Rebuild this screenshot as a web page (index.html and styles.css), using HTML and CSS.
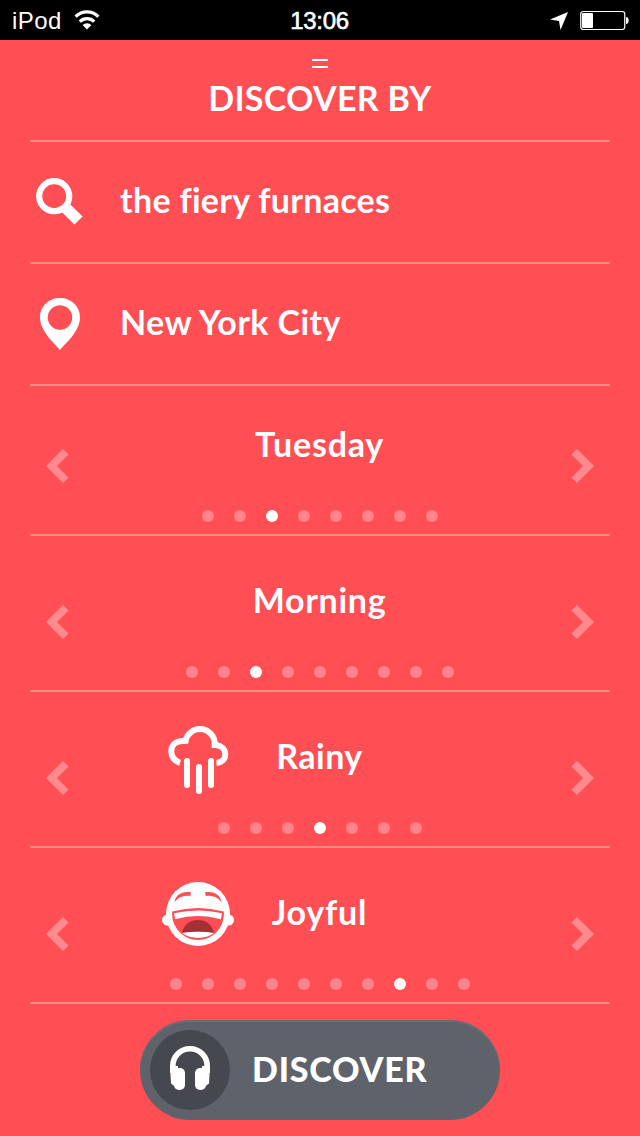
FILE: index.html
```html
<!DOCTYPE html>
<html lang="en">
<head>
    <meta charset="UTF-8">
    <meta name="viewport" content="width=device-width, initial-scale=1.0">
    <title>Discover</title>
    <link rel="stylesheet" href="styles.css">
</head>
<body>
    <div class="status-bar">
        <div class="status-left">
            <span class="device">iPod</span>
            <svg class="wifi" width="26" height="20" viewBox="0 0 26 20">
                <path d="M1.600 6.600a16 16 0 0 1 22.800 0M5.800 11.600a10.200 10.200 0 0 1 14.400 0" fill="none" stroke="#fff" stroke-width="3.200"/>
                <path d="M13 19.500l-4.400-4.500a6.400 6.400 0 0 1 8.800 0z" fill="#fff"/>
            </svg>
        </div>
        <span class="time">13:06</span>
        <div class="status-right">
            <svg class="location" width="18" height="18" viewBox="0 0 18 18">
                <path d="M18 0L10.500 18 9 9 0 7.600z" fill="#fff"/>
            </svg>
            <svg width="50" height="20" viewBox="0 0 50 20">
                <rect x=".75" y="1.500" width="44" height="18" rx="2.500" fill="none" stroke="#fff" stroke-width="1.200"/>
                <rect x="2" y="3" width="11" height="15" rx="1" fill="#fff"/>
                <path d="M46 7c3.600 0 3.600 7 0 7z" fill="#fff"/>
            </svg>
        </div>
    </div>

    <div class="panel">
        <header class="header">
            <div class="handle"></div>
            <h1>DISCOVER BY</h1>
        </header>

        <div class="field">
            <svg class="field-icon" width="60" height="60" viewBox="0 0 60 60">
                <circle cx="24.200" cy="26.200" r="15" fill="none" stroke="#fff" stroke-width="6.200"/>
                <path d="M38.600 32.800L52.600 46.400 44.400 54.400 31 41.200z" fill="#fff"/>
            </svg>
            <span class="query">the fiery furnaces</span>
        </div>

        <div class="field">
            <svg class="field-icon" width="60" height="60" viewBox="0 0 60 60">
                <path fill-rule="evenodd" d="M30 58C26 53 10 39.500 10 25.500C10 14 19 6 30 6s20 8 20 19.500C50 39.500 34 53 30 58zM30 13.300a12.200 12.200 0 1 0 0 24.400 12.200 12.200 0 0 0 0-24.400z" fill="#fff"/>
            </svg>
            <span class="city">New York City</span>
        </div>

        <div class="picker picker-day">
            <div class="picker-main">
                <svg class="arrow prev" width="24" height="34" viewBox="0 0 24 34"><path d="M0 17L17 0l5.500 5.500L11 17l11.500 11.500L17 34z"/></svg>
                <span class="label day">Tuesday</span>
                <svg class="arrow next" width="24" height="34" viewBox="0 0 24 34"><path d="M24 17L7 0 1.500 5.500 13 17 1.500 28.500 7 34z"/></svg>
            </div>
            <div class="dots"><i></i><i></i><i class="active"></i><i></i><i></i><i></i><i></i><i></i></div>
        </div>

        <div class="picker">
            <div class="picker-main">
                <svg class="arrow prev" width="24" height="34" viewBox="0 0 24 34"><path d="M0 17L17 0l5.500 5.500L11 17l11.500 11.500L17 34z"/></svg>
                <span class="label time-of-day">Morning</span>
                <svg class="arrow next" width="24" height="34" viewBox="0 0 24 34"><path d="M24 17L7 0 1.500 5.500 13 17 1.500 28.500 7 34z"/></svg>
            </div>
            <div class="dots"><i></i><i></i><i class="active"></i><i></i><i></i><i></i><i></i><i></i><i></i></div>
        </div>

        <div class="picker">
            <div class="picker-main">
                <svg class="arrow prev" width="24" height="34" viewBox="0 0 24 34"><path d="M0 17L17 0l5.500 5.500L11 17l11.500 11.500L17 34z"/></svg>
                <svg class="picker-icon" width="72" height="68" viewBox="0 0 72 68">
                    <path d="M18 36.800C6 33.500 6 15 20.500 15h2.800v2.700a14.700 14.700 0 0 1 29.400 0v1.400C66.500 19.500 66.500 36.500 54.500 36.800" fill="none" stroke="#fff" stroke-width="6"/>
                    <path d="M25 35v24M37 41v24M49 35v24" stroke="#fff" stroke-width="6" stroke-linecap="round"/>
                </svg>
                <span class="label weather">Rainy</span>
                <svg class="arrow next" width="24" height="34" viewBox="0 0 24 34"><path d="M24 17L7 0 1.500 5.500 13 17 1.500 28.500 7 34z"/></svg>
            </div>
            <div class="dots"><i></i><i></i><i></i><i class="active"></i><i></i><i></i><i></i></div>
        </div>

        <div class="picker">
            <div class="picker-main">
                <svg class="arrow prev" width="24" height="34" viewBox="0 0 24 34"><path d="M0 17L17 0l5.500 5.500L11 17l11.500 11.500L17 34z"/></svg>
                <svg class="picker-icon face" width="72" height="64" viewBox="0 0 72 64">
                    <circle cx="36" cy="32" r="32" fill="#fff"/>
                    <circle cx="5.500" cy="38" r="5.500" fill="#fff"/>
                    <circle cx="66.500" cy="38" r="5.500" fill="#fff"/>
                    <!-- eyes -->
                    <path d="M12.500 20C13.500 13 20 8.500 29 10.300L28.300 14C21.500 12.800 17 15 12.500 20zM59.500 20C58.500 13 52 8.500 43 10.300L43.700 14C50.500 12.800 55 15 59.500 20z" fill="#ff4e54"/>
                    <!-- mouth -->
                    <path d="M10.200 29.500Q36 22.500 61.800 29.500C63 45 51 58 36 58S9 45 10.200 29.500z" fill="#ff4e54"/>
                    <path d="M12 31.300Q36 25.500 60 31.300L58.800 37.300Q36 30.500 13.200 37.300z" fill="#fff"/>
                    <path d="M20 51C22 42 28 38 36 38s14 4 16 13Q36 48.500 20 51z" fill="#a62f36"/>
                    <path d="M20 51Q36 48.500 52 51C43 57.500 29 57.500 20 51z" fill="#fff"/>
                </svg>
                <span class="label mood">Joyful</span>
                <svg class="arrow next" width="24" height="34" viewBox="0 0 24 34"><path d="M24 17L7 0 1.500 5.500 13 17 1.500 28.500 7 34z"/></svg>
            </div>
            <div class="dots"><i></i><i></i><i></i><i></i><i></i><i></i><i></i><i class="active"></i><i></i><i></i></div>
        </div>

        <button class="discover-button">
            <span class="badge">
                <svg width="40" height="44" viewBox="0 0 40 44">
                    <path d="M2.800 27V20a17.200 17.200 0 0 1 34.400 0v7" fill="none" stroke="#fff" stroke-width="5.600"/>
                    <path d="M0 20L1 37.500l4 3 3-2V20zM40 20l-1 17.500-4 3-3-2V20z" fill="#fff"/>
                    <rect x="4" y="22" width="11" height="22" rx="5" fill="#fff"/>
                    <rect x="25" y="22" width="11" height="22" rx="5" fill="#fff"/>
                </svg>
            </span>
            <span class="button-text">DISCOVER</span>
        </button>
    </div>
</body>
</html>
```
FILE: styles.css
```css
* {
    margin: 0;
    padding: 0;
    box-sizing: border-box;
}

body {
    width: 640px;
    height: 1136px;
    overflow: hidden;
    background: #ff4e54;
    color: white;
    font-family: Lato, 'Avenir Next', sans-serif;
    font-size: 34px;
    font-weight: 700;
    line-height: 40px;
    white-space: nowrap;
    font-variant-ligatures: none;
}

svg {
    display: block;
}

.status-bar {
    display: grid;
    grid-template-columns: 1fr auto 1fr;
    align-items: center;
    height: 40px;
    padding: 0 10px 0 12px;
    background: #000;
    font-family: 'Liberation Sans', Arial, sans-serif;
    font-size: 24px;
    font-weight: 400;
    line-height: 30px;
}

.status-left,
.status-right {
    display: flex;
    align-items: center;
    gap: 12px;
}

.status-right {
    justify-content: flex-end;
}

.device {
    padding-top: 2px;
    letter-spacing: 0.4px;
}

.time {
    padding: 2px 3px 0 0;
    letter-spacing: -0.3px;
    -webkit-text-stroke: 0.6px #fff;
}

.location {
    margin-top: 2px;
}

.panel {
    padding: 0 30px;
}

.header {
    height: 102px;
    padding-top: 19px;
    border-bottom: 2px solid #ff8b85;
    text-align: center;
}

.handle {
    width: 16px;
    height: 9px;
    margin: 0 auto 10px;
    border-top: 2px solid #fff;
    border-bottom: 2px solid #fff;
}

h1 {
    font-size: 34px;
    font-weight: 700;
    letter-spacing: 0.3px;
}

.field {
    display: flex;
    align-items: center;
    gap: 30px;
    height: 122px;
    padding-bottom: 4px;
    border-bottom: 2px solid #ff8b85;
}

.query {
    letter-spacing: 0.3px;
}

.city {
    letter-spacing: 0.4px;
}

.picker {
    display: flex;
    flex-direction: column;
    justify-content: flex-end;
    height: 156px;
    padding-bottom: 12px;
    border-bottom: 2px solid #ff8b85;
}

.picker-day {
    height: 150px;
}

.picker-main {
    display: grid;
    grid-template-columns: 24px 1fr 160px 1fr 24px;
    align-items: center;
    height: 104px;
    padding: 0 16px;
}

.arrow {
    grid-row: 1;
    margin-top: 16px;
    fill: #ff8a8e;
}

.prev {
    grid-column: 1;
}

.next {
    grid-column: 5;
}

.picker-icon {
    grid-column: 2;
    grid-row: 1;
    justify-self: end;
    margin: 0 6px 20px 0;
}

.face {
    margin-bottom: 24px;
}

.label {
    grid-column: 3;
    grid-row: 1;
    margin: 0 1px 28px 0;
    text-align: center;
}

.day,
.mood {
    letter-spacing: 0.8px;
}

.time-of-day {
    letter-spacing: 0.7px;
}

.weather {
    letter-spacing: 0.5px;
}

.dots {
    display: flex;
    justify-content: center;
    gap: 20px;
}

.dots i {
    width: 12px;
    height: 12px;
    border-radius: 50%;
    background: #ff858a;
}

.dots .active {
    background: #fff;
}

.discover-button {
    display: flex;
    align-items: center;
    gap: 22px;
    width: 360px;
    height: 100px;
    margin: 16px auto 0;
    padding: 0 10px;
    border: 0;
    border-radius: 50px;
    background: #5e626a;
    box-shadow: inset 0 2px 0 #6b6e76;
    color: white;
    font: inherit;
    font-weight: 900;
}

.badge {
    display: flex;
    align-items: center;
    justify-content: center;
    width: 80px;
    height: 80px;
    padding-bottom: 4px;
    border-radius: 50%;
    background: #45484f;
}

.button-text {
    padding-bottom: 2px;
    letter-spacing: 0.8px;
}
```
